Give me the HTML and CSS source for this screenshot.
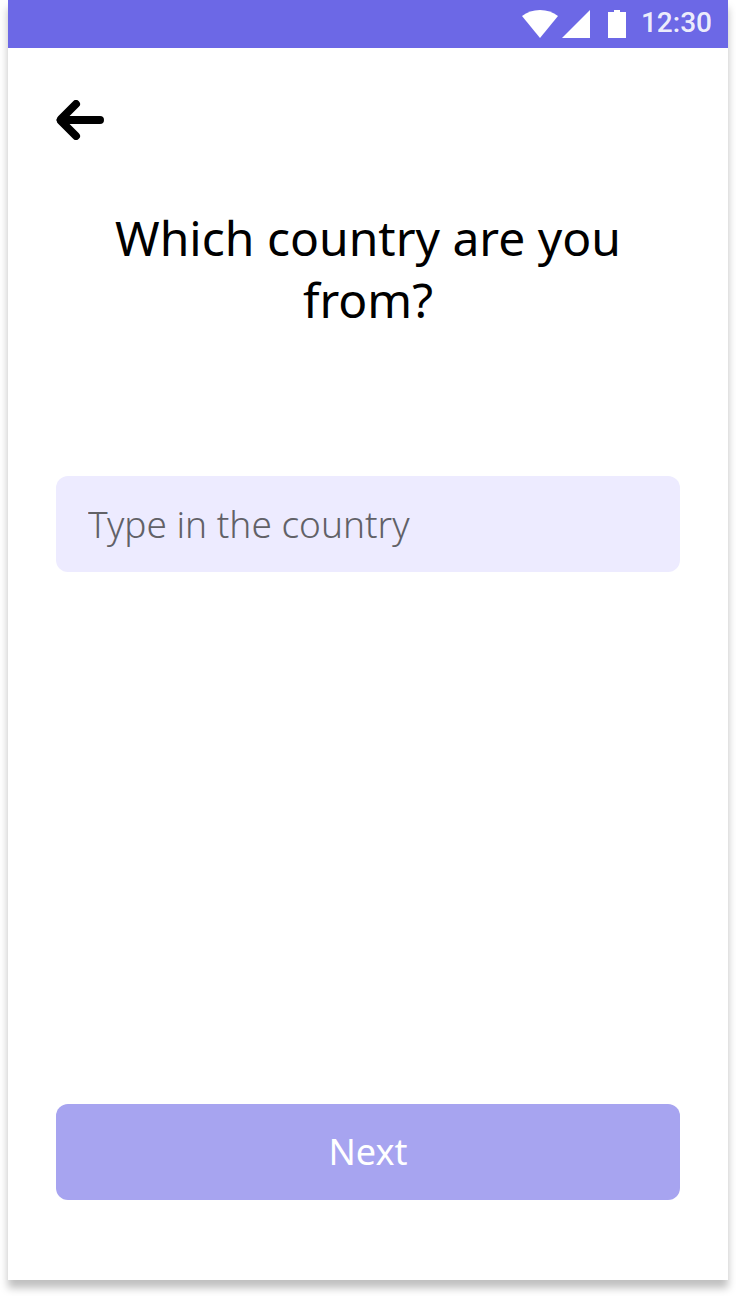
FILE: index.html
```html
<!DOCTYPE html>
<html lang="en">
<head>
<meta charset="utf-8">
<meta name="viewport" content="width=device-width, initial-scale=1">
<title>Select country</title>
<link rel="stylesheet" href="styles.css">
</head>
<body>
<div class="screen">
  <header class="status-bar">
    <svg class="status-icons" width="104" height="28" viewBox="0 0 104 28" fill="#fff" aria-hidden="true">
      <path d="M0 6C5 2 11 0 18 0s13 2 18 6L18 28z"/>
      <path d="M68 0v28H40z"/>
      <path d="M92 0h6v2h6v26H86V2h6z"/>
    </svg>
    <time class="clock">12:30</time>
  </header>
  <main class="content">
    <button class="back" type="button" aria-label="Back">
      <svg width="48" height="40" viewBox="0 0 48 40" fill="none" stroke="#000" stroke-width="8" stroke-linecap="round" aria-hidden="true">
        <path d="M20 4 5 19M20 36 5 21M8 20h36"/>
        <path d="M3 17 0 20l3 3 4-3z" fill="#000" stroke="none"/>
      </svg>
    </button>
    <form class="form">
      <h1 class="title"><label for="country">Which country are you from?</label></h1>
      <input class="field" id="country" type="text" placeholder="Type in the country">
      <button class="next" type="button">Next</button>
    </form>
  </main>
</div>
</body>
</html>
```
FILE: styles.css
```css
* {
  box-sizing: border-box;
}

body {
  margin: 0;
  background: #fff;
  font-family: "Noto Sans", sans-serif;
}

.screen {
  display: flex;
  flex-direction: column;
  min-height: calc(100vh - 16px);
  margin: 0 8px 16px;
  background: #fff;
  box-shadow: 0 8px 8px rgba(0, 0, 0, 0.25);
}

.status-bar {
  display: flex;
  align-items: center;
  justify-content: flex-end;
  gap: 15px;
  height: 48px;
  padding: 0 16px;
  background: #6c68e6;
}

.clock {
  color: rgba(255, 255, 255, 0.9);
  font-family: Roboto, sans-serif;
  font-size: 28px;
  font-weight: 500;
  line-height: 32px;
  padding-bottom: 2px;
}

.content {
  flex: 1;
  display: flex;
  flex-direction: column;
  padding: 52px 48px 80px;
}

.back {
  display: flex;
  align-self: flex-start;
  padding: 0;
  border: 0;
  background: none;
}

.form {
  flex: 1;
  display: flex;
  flex-direction: column;
  padding-top: 67px;
}

.title {
  margin: 0 0 145px;
  color: #000;
  font-size: 48px;
  font-weight: 400;
  line-height: 62px;
  text-align: center;
}

.field {
  width: 100%;
  height: 96px;
  padding: 0 32px 2px;
  border: 0;
  border-radius: 12px;
  background: #edebff;
  color: #000;
  font-family: inherit;
  font-size: 37px;
  font-weight: 300;
}

.field::placeholder {
  color: #616167;
  opacity: 1;
}

.next {
  height: 96px;
  margin-top: auto;
  padding: 0 32px 2px;
  border: 0;
  border-radius: 12px;
  background: #a7a4f0;
  color: #fff;
  font-family: inherit;
  font-size: 36px;
  font-weight: 400;
}
```
